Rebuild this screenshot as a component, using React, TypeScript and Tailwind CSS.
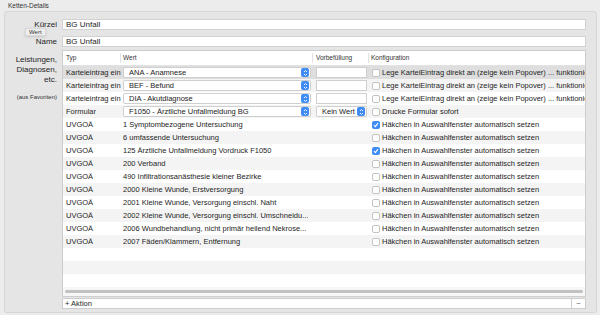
import React from "react";

type Row = {
  typ: string;
  wert: string;
  popup?: boolean;
  vor?: "field" | "popup";
  conf: string;
  checked?: boolean;
};

const rows: Row[] = [
  { typ: "Karteieintrag ein", wert: "ANA - Anamnese", popup: true, vor: "field", conf: "Lege KarteiEintrag direkt an (zeige kein Popover) ... funktionier" },
  { typ: "Karteieintrag ein", wert: "BEF - Befund", popup: true, vor: "field", conf: "Lege KarteiEintrag direkt an (zeige kein Popover) ... funktionier" },
  { typ: "Karteieintrag ein", wert: "DIA - Akutdiagnose", popup: true, vor: "field", conf: "Lege KarteiEintrag direkt an (zeige kein Popover) ... funktionier" },
  { typ: "Formular", wert: "F1050 - Ärztliche Unfallmeldung BG", popup: true, vor: "popup", conf: "Drucke Formular sofort" },
  { typ: "UVGOÄ", wert: "1 Symptombezogene Untersuchung", conf: "Häkchen in Auswahlfenster automatisch setzen", checked: true },
  { typ: "UVGOÄ", wert: "6 umfassende Untersuchung", conf: "Häkchen in Auswahlfenster automatisch setzen" },
  { typ: "UVGOÄ", wert: "125 Ärztliche Unfallmeldung Vordruck F1050", conf: "Häkchen in Auswahlfenster automatisch setzen", checked: true },
  { typ: "UVGOÄ", wert: "200 Verband", conf: "Häkchen in Auswahlfenster automatisch setzen" },
  { typ: "UVGOÄ", wert: "490 Infiltrationsanästhesie kleiner Bezirke", conf: "Häkchen in Auswahlfenster automatisch setzen" },
  { typ: "UVGOÄ", wert: "2000 Kleine Wunde, Erstversorgung", conf: "Häkchen in Auswahlfenster automatisch setzen" },
  { typ: "UVGOÄ", wert: "2001 Kleine Wunde, Versorgung einschl. Naht", conf: "Häkchen in Auswahlfenster automatisch setzen" },
  { typ: "UVGOÄ", wert: "2002 Kleine Wunde, Versorgung einschl. Umschneidu...", conf: "Häkchen in Auswahlfenster automatisch setzen" },
  { typ: "UVGOÄ", wert: "2006 Wundbehandlung, nicht primär heilend Nekrose...", conf: "Häkchen in Auswahlfenster automatisch setzen" },
  { typ: "UVGOÄ", wert: "2007 Fäden/Klammern, Entfernung", conf: "Häkchen in Auswahlfenster automatisch setzen" },
];

function Stepper() {
  return (
    <div className="w-[8px] h-full rounded-[2px] bg-[#3f8cf4] flex items-center justify-center">
      <svg width="5" height="8" viewBox="0 0 5 8" fill="none" stroke="white" strokeWidth="0.9">
        <path d="M1 3 L2.5 1.5 L4 3" />
        <path d="M1 5 L2.5 6.5 L4 5" />
      </svg>
    </div>
  );
}

function Popup({ label, className }: { label: string; className: string }) {
  return (
    <div className={`h-[11px] flex items-center bg-white rounded-[2px] border border-[#cfcfcf] pl-[5px] pr-[1px] ${className}`}>
      <span className="flex-1 min-w-0 truncate text-[7.5px] text-[#222]">{label}</span>
      <div className="h-[9px] shrink-0">
        <Stepper />
      </div>
    </div>
  );
}

function Check({ checked }: { checked?: boolean }) {
  if (checked)
    return (
      <div className="w-[8px] h-[8px] rounded-[2px] bg-[#3f8cf4] flex items-center justify-center shrink-0">
        <svg width="6" height="6" viewBox="0 0 6 6" fill="none" stroke="white" strokeWidth="1.1">
          <path d="M1 3.2 L2.4 4.6 L5 1.2" />
        </svg>
      </div>
    );
  return <div className="w-[8px] h-[8px] rounded-[2px] bg-white border border-[#c4c4c4] shrink-0" />;
}

export default function App() {
  return (
    <div className="w-[600px] h-[315px] bg-[#ececec] overflow-hidden relative font-[Liberation_Sans] text-[#1e1e1e]">
      <div className="pl-[8px] h-[11px] text-[6.5px] leading-[12px] text-[#333]">Ketten-Details</div>
      <div className="ml-[4px] mr-[3px] h-[302px] bg-[#e5e5e5] border border-[#d6d6d6] rounded-[3px] pt-[7px] pr-[10px] flex flex-col">
        <div className="flex items-center h-[11px]">
          <div className="w-[53px] shrink-0 text-right text-[8px] pr-[1px]">Kürzel</div>
          <div className="ml-[4px] flex-1 min-w-0 h-[11px] bg-white border border-[#d2d2d2] text-[8px] leading-[9px] pl-[3px]">BG Unfall</div>
        </div>
        <div className="flex items-center h-[11px] mt-[6px]">
          <div className="w-[53px] shrink-0 text-right text-[8px] pr-[1px]">Name</div>
          <div className="ml-[4px] flex-1 min-w-0 h-[11px] bg-white border border-[#d2d2d2] text-[8px] leading-[9px] pl-[3px]">BG Unfall</div>
        </div>
        <div className="flex mt-[3px]">
          <div className="w-[53px] shrink-0 text-right pr-[1px] pt-[5px]">
            <div className="text-[8px] leading-[10px]">
              Leistungen,
              <br />
              Diagnosen,
              <br />
              etc.
            </div>
            <div className="text-[6px] mt-[8px] text-[#333] whitespace-nowrap">(aus Favoriten)</div>
          </div>
          <div className="ml-[4px] flex-1 min-w-0 flex flex-col">
            <div className="h-[247px] border border-[#cdcdcd] bg-white flex flex-col overflow-hidden">
              <div className="flex h-[15px] shrink-0 items-center bg-white border-b border-[#e2e2e2] text-[6.5px] text-[#333]">
                <div className="w-[58px] shrink-0 pl-[3px] border-r border-[#e2e2e2] h-[10px] leading-[10px]">Typ</div>
                <div className="w-[192px] shrink-0 pl-[2px] border-r border-[#e2e2e2] h-[10px] leading-[10px]">Wert</div>
                <div className="w-[56px] shrink-0 pl-[3px] border-r border-[#e2e2e2] h-[10px] leading-[10px]">Vorbefüllung</div>
                <div className="flex-1 min-w-0 pl-[2px] h-[10px] leading-[10px]">Konfiguration</div>
              </div>
              {rows.map((r, i) => (
                <div
                  key={i}
                  className={`flex h-[13px] items-center text-[7.5px] shrink-0 ${i === 0 ? "bg-[#dedede]" : i % 2 === 1 ? "bg-[#f4f4f4]" : "bg-white"}`}
                >
                  <div className="w-[58px] shrink-0 pl-[3px] overflow-hidden whitespace-nowrap">{r.typ}</div>
                  <div className="w-[192px] shrink-0 pl-[2px] pr-[2px] overflow-hidden whitespace-nowrap">
                    {r.popup ? <Popup label={r.wert} className="w-[188px]" /> : r.wert}
                  </div>
                  <div className="w-[56px] shrink-0 pl-[3px]">
                    {r.vor === "field" && <div className="w-[51px] h-[11px] bg-white border border-[#cfcfcf]" />}
                    {r.vor === "popup" && <Popup label="Kein Wert" className="w-[51px]" />}
                  </div>
                  <div className="flex-1 min-w-0 pl-[3px] flex items-center gap-[2px] overflow-hidden whitespace-nowrap">
                    <Check checked={r.checked} />
                    <span>{r.conf}</span>
                  </div>
                </div>
              ))}
              <div className="h-[13px] bg-white shrink-0" />
              <div className="h-[13px] bg-[#f4f4f4] shrink-0" />
              <div className="h-[13px] bg-white shrink-0" />
              <div className="flex-1 bg-[#f7f7f7] flex items-center px-[2px]">
                <div className="h-[3px] w-full rounded-full bg-[#c2c2c2]" />
              </div>
            </div>
            <div className="mt-[1px] h-[11px] bg-white border border-[#cdcdcd] flex items-center text-[7.5px]">
              <span className="pl-[2px] flex-1">+ Aktion</span>
              <div className="w-[14px] h-full border-l border-[#cdcdcd] flex items-center justify-center text-[#555]">−</div>
            </div>
          </div>
        </div>
      </div>
      <div className="absolute left-[25px] top-[28px] h-[8px] px-[3px] bg-[#efefef] border border-[#d8d8d8] shadow-sm text-[6px] leading-[7px] text-[#333]">
        Wert
      </div>
    </div>
  );
}
